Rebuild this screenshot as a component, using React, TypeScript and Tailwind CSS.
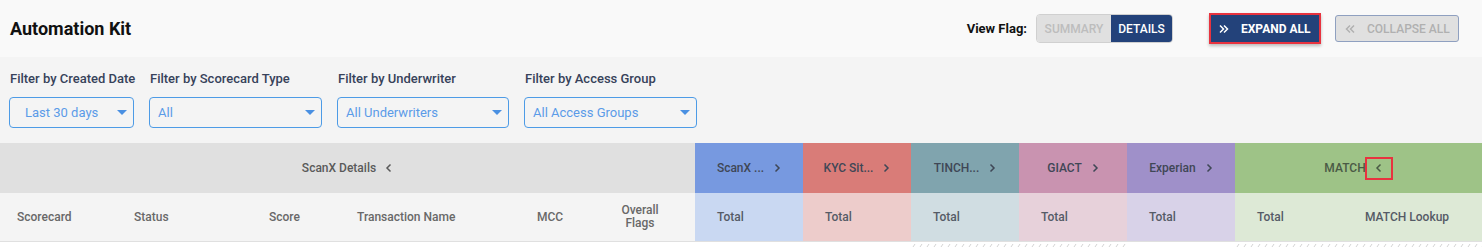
import React from "react";

const Chev = ({ dir = "right", className = "" }: { dir?: "right" | "left"; className?: string }) => (
  <svg width="8" height="10" viewBox="0 0 8 10" className={className}>
    <path
      d={dir === "right" ? "M2.5 1.5 L6 5 L2.5 8.5" : "M5.5 1.5 L2 5 L5.5 8.5"}
      fill="none"
      stroke="currentColor"
      strokeWidth="1.5"
    />
  </svg>
);

const DoubleChev = ({ dir = "right", className = "" }: { dir?: "right" | "left"; className?: string }) => (
  <svg width="10" height="10" viewBox="0 0 10 10" className={className}>
    {dir === "right" ? (
      <path d="M1 1.5 L4.5 5 L1 8.5 M5 1.5 L8.5 5 L5 8.5" fill="none" stroke="currentColor" strokeWidth="1.5" />
    ) : (
      <path d="M5 1.5 L1.5 5 L5 8.5 M9 1.5 L5.5 5 L9 8.5" fill="none" stroke="currentColor" strokeWidth="1.5" />
    )}
  </svg>
);

const Caret = () => (
  <svg width="10" height="6" viewBox="0 0 10 6">
    <path d="M0 0 L10 0 L5 5 Z" fill="#4a90e2" />
  </svg>
);

const Filter = ({ label, value, width, pl }: { label: string; value: string; width: string; pl: string }) => (
  <div className={`flex flex-col ${width}`}>
    <div className="text-[13px] font-medium text-[#37425a] leading-[16px] pl-[1px] whitespace-nowrap">{label}</div>
    <div
      className={`mt-[10px] h-[31px] rounded-[4px] border border-[#4d9be6] bg-[#f4f4f4] flex items-center ${pl} pr-[6px]`}
    >
      <span className="text-[13px] text-[#5b9be8]">{value}</span>
      <span className="ml-auto flex items-center">
        <Caret />
      </span>
    </div>
  </div>
);

const Dashes = () => (
  <svg width="100%" height="6">
    <defs>
      <pattern id="dash" width="7" height="6" patternUnits="userSpaceOnUse">
        <path d="M2 5 L4 2" stroke="#d4d4d4" strokeWidth="1" />
      </pattern>
    </defs>
    <rect width="100%" height="6" fill="url(#dash)" />
  </svg>
);

const groups = [
  { name: "ScanX ...", head: "bg-[#7799e0]", cell: "bg-[#c9d8f2]" },
  { name: "KYC Sit...", head: "bg-[#d97c78]", cell: "bg-[#edcccb]" },
  { name: "TINCH...", head: "bg-[#80a4ae]", cell: "bg-[#d0dde2]" },
  { name: "GIACT", head: "bg-[#c993b0]", cell: "bg-[#e7d1da]" },
  { name: "Experian", head: "bg-[#9f90c9]", cell: "bg-[#d8d2e8]" },
];

export default function App() {
  return (
    <div className="w-[1482px] h-[248px] bg-white overflow-hidden font-['Roboto',sans-serif]">
      {/* Header */}
      <header className="h-[57px] bg-[#f9f9f9] flex items-center pl-[10px] pr-[23px]">
        <h1 className="text-[18px] font-bold text-[#111]">Automation Kit</h1>
        <div className="ml-auto flex items-center">
          <span className="text-[13px] font-bold text-[#111]">View Flag:</span>
          <div className="ml-[9px] flex h-[29px] rounded-[4px] overflow-hidden border border-[#d0d0d0]">
            <div className="w-[74px] flex items-center justify-center bg-[#e0e0e0] text-[12px] font-medium text-[#bdbdbd]">
              SUMMARY
            </div>
            <div className="w-[61px] flex items-center justify-center bg-[#23427a] text-[12px] font-medium text-white">
              DETAILS
            </div>
          </div>
          <button className="ml-[36px] h-[31px] w-[112px] border-2 border-[#e8333f] bg-[#23427a] text-white flex items-center pl-[8px] gap-[12px] shadow-[0_2px_3px_rgba(0,0,0,0.25)]">
            <DoubleChev />
            <span className="text-[12px] font-bold">EXPAND ALL</span>
          </button>
          <button className="ml-[14px] h-[27px] w-[124px] rounded-[3px] border border-[#8fa0c0] bg-[#e0e0e0] text-[#b0b0b0] flex items-center pl-[9px] gap-[12px]">
            <DoubleChev dir="left" />
            <span className="text-[12px] font-medium">COLLAPSE ALL</span>
          </button>
        </div>
      </header>

      {/* Filters */}
      <section className="h-[86px] bg-[#f4f4f4] flex gap-[15px] pl-[9px] pt-[14px]">
        <Filter label="Filter by Created Date" value="Last 30 days" width="w-[125px]" pl="pl-[15px]" />
        <Filter label="Filter by Scorecard Type" value="All" width="w-[173px]" pl="pl-[8px]" />
        <Filter label="Filter by Underwriter" value="All Underwriters" width="w-[172px]" pl="pl-[8px]" />
        <Filter label="Filter by Access Group" value="All Access Groups" width="w-[173px]" pl="pl-[8px]" />
      </section>

      {/* Table header row 1 */}
      <div className="flex h-[50px] text-[12px] font-medium">
        <div className="w-[695px] bg-[#e0e0e0] flex items-center justify-center gap-[9px] text-[#5a5a5a]">
          <span>ScanX Details</span>
          <Chev dir="left" />
        </div>
        {groups.map((g) => (
          <div key={g.name} className={`w-[108px] ${g.head} flex items-center justify-center gap-[9px] text-[#3f4756]`}>
            <span>{g.name}</span>
            <Chev />
          </div>
        ))}
        <div className="flex-1 bg-[#9ec387] flex items-center justify-center text-[#4a5a45]">
          <span>MATCH</span>
          <span className="ml-[-1px] w-[28px] h-[23px] border-2 border-[#e8333f] flex items-center justify-center">
            <Chev dir="left" />
          </span>
        </div>
      </div>

      {/* Table header row 2 */}
      <div className="flex h-[49px] border-b border-[#e0e0e0] text-[12px] font-medium">
        <div className="w-[695px] bg-[#f4f4f4] flex text-[#686868]">
          <div className="w-[117px] pl-[17px] flex items-center">Scorecard</div>
          <div className="w-[135px] pl-[17px] flex items-center">Status</div>
          <div className="w-[88px] pl-[17px] flex items-center">Score</div>
          <div className="w-[180px] pl-[17px] flex items-center">Transaction Name</div>
          <div className="w-[65px] pl-[17px] flex items-center">MCC</div>
          <div className="w-[110px] flex items-center justify-center text-center leading-[13px]">
            Overall
            <br />
            Flags
          </div>
        </div>
        {groups.map((g) => (
          <div key={g.name} className={`w-[108px] ${g.cell} pl-[22px] flex items-center text-[#555b66]`}>
            Total
          </div>
        ))}
        <div className="flex-1 bg-[#dde9d6] flex text-[#555b66]">
          <div className="w-[108px] pl-[22px] flex items-center">Total</div>
          <div className="flex-1 pl-[22px] flex items-center">MATCH Lookup</div>
        </div>
      </div>

      {/* Dashed strip */}
      <div className="flex h-[6px]">
        <div className="w-[911px]" />
        <div className="w-[216px]">
          <Dashes />
        </div>
        <div className="w-[108px]" />
        <div className="flex-1">
          <Dashes />
        </div>
      </div>
    </div>
  );
}
